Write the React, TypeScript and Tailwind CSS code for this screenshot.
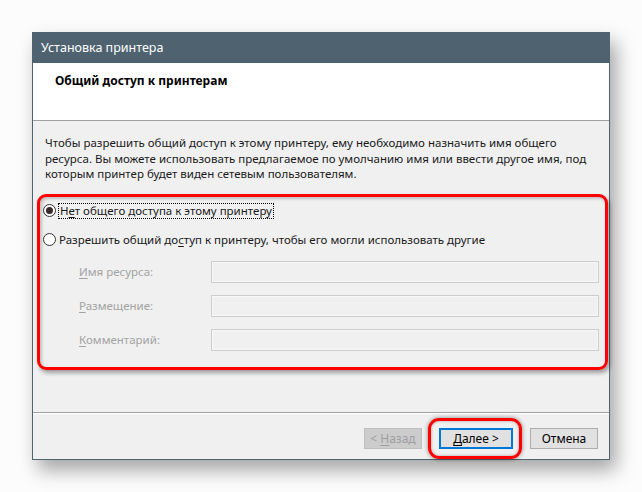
import React from "react";

function Radio({ checked }: { checked?: boolean }) {
  return (
    <span className="flex h-[13px] w-[13px] shrink-0 items-center justify-center rounded-full border border-[#333] bg-white">
      {checked && <span className="h-[7px] w-[7px] rounded-full bg-[#3a2a2a]" />}
    </span>
  );
}

function Field({ label, first }: { label: string; first: string }) {
  return (
    <div className="flex h-[22px] items-center">
      <div className="w-[168px] pl-[36px] text-[#a3a3a3]">
        <span className="underline underline-offset-2">{first}</span>
        {label}
      </div>
      <div className="h-[22px] flex-1 border border-[#cdcdcd] bg-[#f0f0f0] shadow-[inset_0_0_0_1px_#f7f7f7]" />
    </div>
  );
}

export default function App() {
  return (
    <div
      className="h-[492px] w-[642px] overflow-hidden bg-[#fcfcfc] pl-[32px] pt-[32px] text-[12px] leading-[16px]"
      style={{ fontFamily: '"Noto Sans", "Open Sans", sans-serif' }}
    >
      <div className="flex h-[428px] w-[578px] flex-col border border-[#4f6473] bg-[#f0f0f0] shadow-[6px_10px_18px_rgba(0,0,0,0.35)]">
        {/* title bar */}
        <div className="flex h-[30px] items-center bg-[#4e6270] pl-[8px] text-[12.5px] text-white">
          Установка принтера
        </div>
        {/* header */}
        <div className="h-[58px] border-b border-[#a0a0a0] bg-white pl-[22px] pt-[10px] text-[12px] font-bold text-black">
          Общий доступ к принтерам
        </div>
        {/* content */}
        <div className="flex flex-1 flex-col border-b border-[#a0a0a0] pl-[12px] pr-[10px] pt-[14px]">
          <p className="text-[11.5px] leading-[15.5px] text-[#1a1a1a]">
            Чтобы разрешить общий доступ к этому принтеру, ему необходимо назначить имя общего
            <br />
            ресурса. Вы можете использовать предлагаемое по умолчанию имя или ввести другое имя, под
            <br />
            которым принтер будет виден сетевым пользователям.
          </p>
          <div className="-ml-[8px] mt-[12px] h-[176px] w-[571px] rounded-[9px] border-[3px] border-[#ff0000] shadow-[2px_3px_4px_rgba(0,0,0,0.35)]">
            <div className="h-full rounded-[6px] pl-[3px] pr-[6px] pt-[5px] text-[11.5px] text-[#1a1a1a] shadow-[inset_2px_2px_3px_rgba(0,0,0,0.2)]">
              <div className="flex h-[18px] items-center">
                <Radio checked />
                <span className="ml-[2px] border border-dotted border-black px-[1px] leading-[14px]">
                  Н<span className="underline underline-offset-2">е</span>т общего доступа к этому принтеру
                </span>
              </div>
              <div className="mt-[11px] flex h-[18px] items-center">
                <Radio />
                <span className="ml-[3px]">
                  Разрешить общий до<span className="underline underline-offset-2">с</span>туп к принтеру, чтобы его могли использовать другие
                </span>
              </div>
              <div className="mt-[12px] flex flex-col gap-[12px]">
                <Field first="И" label="мя ресурса:" />
                <Field first="Р" label="азмещение:" />
                <Field first="К" label="омментарий:" />
              </div>
            </div>
          </div>
        </div>
        {/* buttons */}
        <div className="flex h-[46px] items-start border-t border-white pr-[11px] pt-[14px] text-[12px]">
          <div className="flex-1" />
          <div className="flex h-[21px] w-[58px] items-center justify-center border border-[#bfbfbf] bg-[#cccccc] text-[#9f9f9f]">
            &lt; <span className="ml-[3px] underline underline-offset-2">Н</span>азад
          </div>
          <div className="relative ml-[17px]">
            <div className="flex h-[21px] w-[74px] items-center justify-center border-2 border-[#0078d7] bg-[#e1e1e1] text-black">
              <span className="underline underline-offset-2">Д</span>алее &gt;
            </div>
            <div className="pointer-events-none absolute -bottom-[10px] -left-[11px] -right-[9px] -top-[10px] rounded-[11px] border-[3px] border-[#ff0000] shadow-[0_0_4px_rgba(0,0,0,0.45),inset_0_0_3px_rgba(0,0,0,0.35)]" />
          </div>
          <div className="ml-[17px] flex h-[21px] w-[68px] items-center justify-center border border-[#adadad] bg-[#e1e1e1] text-black">
            Отмена
          </div>
        </div>
      </div>
    </div>
  );
}
